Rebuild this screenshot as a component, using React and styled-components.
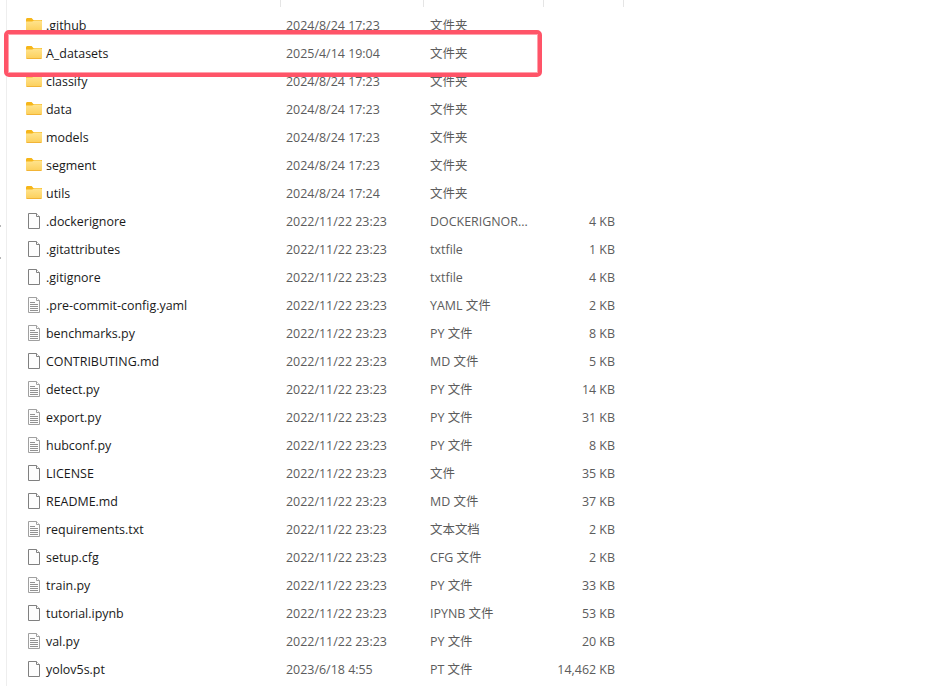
import React from 'react';
import styled, { createGlobalStyle } from 'styled-components';

const GlobalStyle = createGlobalStyle`
  html, body {
    margin: 0;
    padding: 0;
    background: #fff;
  }
`;

const Page = styled.div`
  position: relative;
  width: 930px;
  height: 686px;
  overflow: hidden;
  background: #fff;
  font-family: "Open Sans", "Noto Sans CJK SC", sans-serif;
  font-size: 12.45px;
  padding-top: 11px;
  box-sizing: border-box;
`;

const PaneEdge = styled.div`
  position: absolute;
  top: 0;
  bottom: 0;
  left: 6px;
  width: 1px;
  background: #eeeeee;
`;

const EdgeMark = styled.div`
  position: absolute;
  left: 0;
  width: 1px;
  height: 2px;
  background: #b5b5b5;
  top: ${(p) => p.$y}px;
`;

const ColumnTick = styled.div`
  position: absolute;
  top: 0;
  width: 1px;
  height: 7px;
  background: #e5e5e5;
  left: ${(p) => p.$x}px;
`;

const Row = styled.div`
  display: grid;
  grid-template-columns: 260px 144px 120px 65px;
  align-items: center;
  height: 28px;
  padding-left: 26px;
  color: #5c5c5c;
  white-space: nowrap;
`;

const NameCell = styled.div`
  display: flex;
  align-items: center;
  gap: 4px;
  color: #1a1a1a;
`;

const IconSlot = styled.span`
  display: flex;
  width: 16px;
  height: 16px;
  flex: none;
`;

const SizeCell = styled.div`
  text-align: right;
`;

const Highlight = styled.div`
  position: absolute;
  left: 4px;
  top: 30px;
  width: 538px;
  height: 47px;
  box-sizing: border-box;
  border: 4px solid #ff5468;
  border-radius: 5px;
  box-shadow: inset 0 0 0 1px rgba(255, 84, 104, 0.55);
`;

const FolderIcon = () => (
  <svg width="16" height="16" viewBox="0 1 16 16">
    <defs>
      <linearGradient id="folderBody" x1="0" y1="0" x2="0" y2="1">
        <stop offset="0" stopColor="#ffe48f" />
        <stop offset="1" stopColor="#fccf5a" />
      </linearGradient>
    </defs>
    <path d="M0 3.5C0 2.7.6 2 1.4 2h4.2L7.4 4H16v3H0z" fill="#f6b61a" />
    <path d="M0 5.5h6.2L8 4.4h6.8c.7 0 1.2.5 1.2 1.2v8c0 .8-.6 1.4-1.4 1.4H1.4C.6 15 0 14.4 0 13.6z" fill="url(#folderBody)" />
    <path d="M.5 14.5h15" stroke="#f2b436" strokeWidth="1" />
  </svg>
);

const FileIcon = ({ lined }) => (
  <svg width="16" height="16" viewBox="0 0 16 16">
    <path
      d="M2.5.5h8l3 3v12h-11z"
      fill="#fdfdfd"
      stroke={lined ? '#a0a0a0' : '#808080'}
      strokeWidth="1"
    />
    <path d="M10.5.5v3h3" fill="#fff" stroke={lined ? '#a0a0a0' : '#808080'} strokeWidth="1" />
    {lined && (
      <path d="M4 5.5h5M4 7.5h8M4 9.5h8M4 11.5h8M4 13.5h8" stroke="#929292" strokeWidth="1" />
    )}
  </svg>
);

const files = [
  { name: '.github', date: '2024/8/24 17:23', type: '文件夹', icon: 'folder' },
  { name: 'A_datasets', date: '2025/4/14 19:04', type: '文件夹', icon: 'folder' },
  { name: 'classify', date: '2024/8/24 17:23', type: '文件夹', icon: 'folder' },
  { name: 'data', date: '2024/8/24 17:23', type: '文件夹', icon: 'folder' },
  { name: 'models', date: '2024/8/24 17:23', type: '文件夹', icon: 'folder' },
  { name: 'segment', date: '2024/8/24 17:23', type: '文件夹', icon: 'folder' },
  { name: 'utils', date: '2024/8/24 17:24', type: '文件夹', icon: 'folder' },
  { name: '.dockerignore', date: '2022/11/22 23:23', type: 'DOCKERIGNOR...', size: '4 KB', icon: 'file' },
  { name: '.gitattributes', date: '2022/11/22 23:23', type: 'txtfile', size: '1 KB', icon: 'file' },
  { name: '.gitignore', date: '2022/11/22 23:23', type: 'txtfile', size: '4 KB', icon: 'file' },
  { name: '.pre-commit-config.yaml', date: '2022/11/22 23:23', type: 'YAML 文件', size: '2 KB', icon: 'lined' },
  { name: 'benchmarks.py', date: '2022/11/22 23:23', type: 'PY 文件', size: '8 KB', icon: 'lined' },
  { name: 'CONTRIBUTING.md', date: '2022/11/22 23:23', type: 'MD 文件', size: '5 KB', icon: 'file' },
  { name: 'detect.py', date: '2022/11/22 23:23', type: 'PY 文件', size: '14 KB', icon: 'lined' },
  { name: 'export.py', date: '2022/11/22 23:23', type: 'PY 文件', size: '31 KB', icon: 'lined' },
  { name: 'hubconf.py', date: '2022/11/22 23:23', type: 'PY 文件', size: '8 KB', icon: 'lined' },
  { name: 'LICENSE', date: '2022/11/22 23:23', type: '文件', size: '35 KB', icon: 'file' },
  { name: 'README.md', date: '2022/11/22 23:23', type: 'MD 文件', size: '37 KB', icon: 'file' },
  { name: 'requirements.txt', date: '2022/11/22 23:23', type: '文本文档', size: '2 KB', icon: 'lined' },
  { name: 'setup.cfg', date: '2022/11/22 23:23', type: 'CFG 文件', size: '2 KB', icon: 'file' },
  { name: 'train.py', date: '2022/11/22 23:23', type: 'PY 文件', size: '33 KB', icon: 'lined' },
  { name: 'tutorial.ipynb', date: '2022/11/22 23:23', type: 'IPYNB 文件', size: '53 KB', icon: 'file' },
  { name: 'val.py', date: '2022/11/22 23:23', type: 'PY 文件', size: '20 KB', icon: 'lined' },
  { name: 'yolov5s.pt', date: '2023/6/18 4:55', type: 'PT 文件', size: '14,462 KB', icon: 'file' },
];

const App = () => (
  <>
    <GlobalStyle />
    <Page>
      <PaneEdge />
      {[225, 257].map((y) => (
        <EdgeMark key={y} $y={y} />
      ))}
      {[280, 423, 543, 623].map((x) => (
        <ColumnTick key={x} $x={x} />
      ))}
      {files.map((f) => (
        <Row key={f.name}>
          <NameCell>
            <IconSlot>
              {f.icon === 'folder' ? <FolderIcon /> : <FileIcon lined={f.icon === 'lined'} />}
            </IconSlot>
            {f.name}
          </NameCell>
          <div>{f.date}</div>
          <div>{f.type}</div>
          <SizeCell>{f.size}</SizeCell>
        </Row>
      ))}
      <Highlight />
    </Page>
  </>
);

export default App;
